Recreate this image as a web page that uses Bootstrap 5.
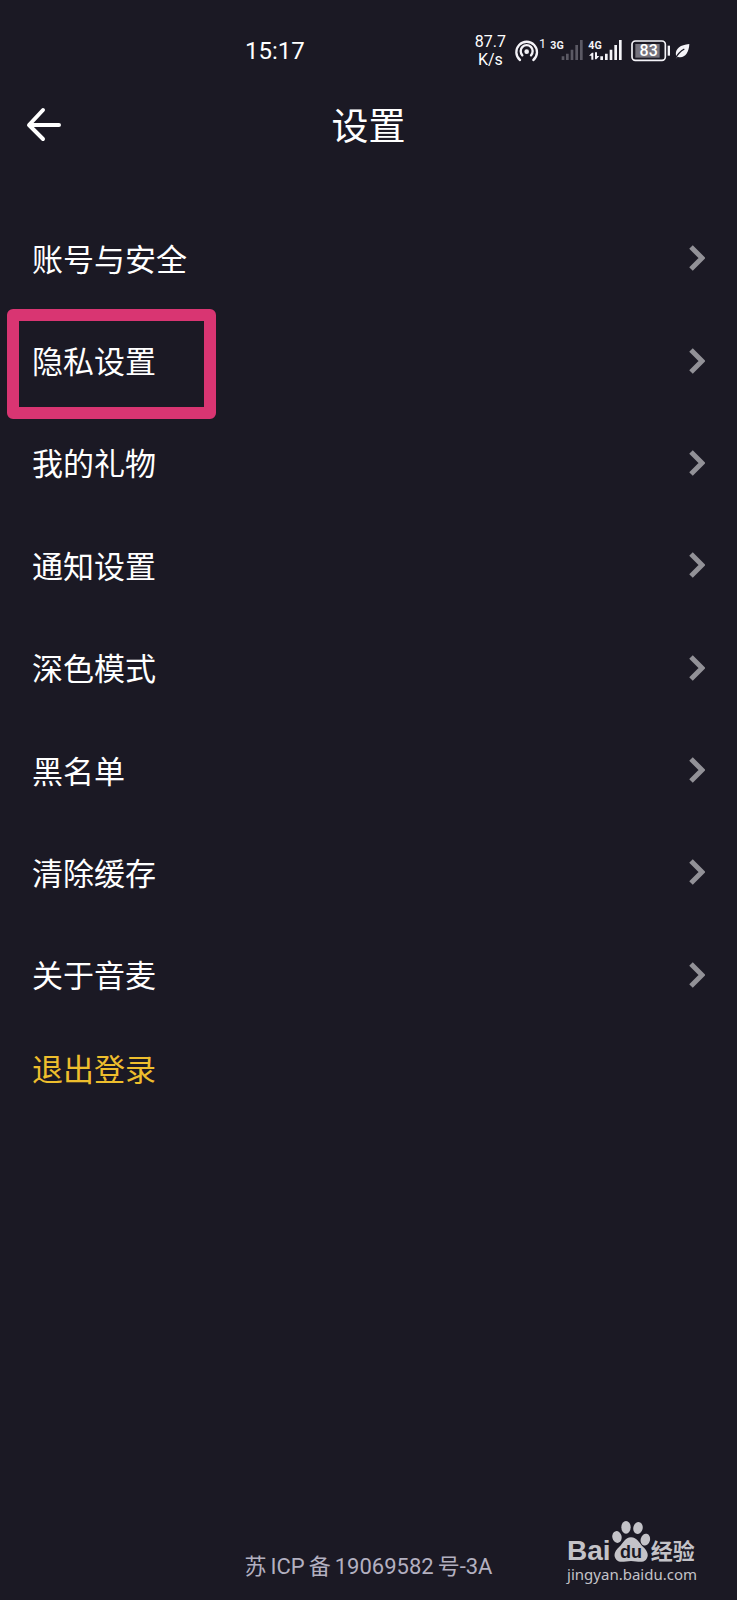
<!DOCTYPE html>
<html lang="zh-CN">
<head>
<meta charset="utf-8">
<meta name="viewport" content="width=device-width, initial-scale=1">
<title>设置</title>
<link href="https://cdn.jsdelivr.net/npm/bootstrap@5.3.0/dist/css/bootstrap.min.css" rel="stylesheet">
<style>
  body { background: #1b1924; color: #fff; font-family: Roboto, "Noto Sans CJK SC", sans-serif; }
  svg { display: block; flex: none; }
  .status-bar { height: 100px; padding: 0 47px 0 245px; }
  .clock { font-size: 24px; line-height: 26px; padding-top: 2px; }
  .net-speed { font-size: 16px; line-height: 18px; text-align: center; padding-top: 2px; }
  .status-icons { gap: 4px; }
  .title-bar { height: 50px; }
  .title-bar h1 { font-size: 37px; line-height: 50px; font-weight: 400; padding-top: 3px; }
  .back-btn { left: 24px; top: 4px; }
  .settings { margin-top: 57px; min-height: 819px; }
  .settings-row { padding: 0 32px; font-size: 31px; line-height: 40px; color: #fff; }
  .settings-row > span:first-child { padding-top: 5px; }
  .highlight-box { left: 7px; top: 0; width: 209px; height: 110px; border: 12px solid #d93572; border-radius: 6px; pointer-events: none; }
  .logout { padding: 4px 32px 0; height: 86px; font-size: 31px; line-height: 40px; color: #eebe2d; }
  .icp { font-size: 22px; line-height: 28px; color: #b3b0c0; padding-bottom: 19px; }
  .watermark { right: 40px; bottom: 15px; color: #c4c3c8; }
  .wm-latin { font: 700 28px/24px "Liberation Sans", sans-serif; }
  .wm-cjk { font: 700 22px/27px "Noto Sans CJK SC", sans-serif; }
  .wm-url { font: 400 15px/22px "Noto Sans", sans-serif; }
</style>
</head>
<body>
<div class="d-flex flex-column min-vh-100 position-relative">
  <div class="status-bar d-flex align-items-center justify-content-between">
    <span class="clock">15:17</span>
    <div class="status-icons d-flex align-items-center">
      <div class="net-speed me-1">87.7<br>K/s</div>
      <svg width="32" height="26" viewBox="162 36 96 78" fill="none" stroke="#f4f3f8" stroke-width="7" stroke-linecap="round">
        <path d="M180 105A31 31 0 1 1 220 105M187 91A18 18 0 1 1 213 91"/>
        <circle cx="200" cy="80" r="7" fill="#f4f3f8" stroke="none"/>
        <text x="237" y="68" font-size="38" fill="#f4f3f8" stroke="none">1</text>
      </svg>
      <svg width="34" height="26" viewBox="270 36 102 78" fill="#5b5964">
        <text x="271" y="71" font-family="Liberation Sans Narrow, Roboto" font-weight="700" font-size="32" fill="#f4f3f8">3G</text>
        <path d="M305 94h8v11h-8zM318 86h8v19h-8zM332 74h8v31h-8zM346 60h8v45h-8zM360 45h8v60h-8z"/>
      </svg>
      <svg width="35" height="26" viewBox="387 36 105 78" fill="#f4f3f8">
        <text x="388" y="71" font-family="Liberation Sans Narrow, Roboto" font-weight="700" font-size="32">4G</text>
        <path d="M424 94h8v11h-8zM438 86h8v19h-8zM452 74h8v31h-8zM466 60h8v45h-8zM480 45h8v60h-8z"/>
        <path d="M390 92l9-9h4v21h-6V92zM408 82v21h4l9-10h-7V82z"/>
      </svg>
      <svg class="ms-1" width="40" height="26" viewBox="512 36 120 78">
        <rect x="515" y="48" width="100" height="58" rx="10" fill="none" stroke="#f4f3f8" stroke-width="5"/>
        <rect x="525" y="57" width="73" height="41" fill="#75737d"/>
        <path d="M622 62h7v30h-7z" fill="#f4f3f8"/>
        <text x="565" y="94" text-anchor="middle" font-weight="500" font-size="48" fill="#fff">83</text>
      </svg>
      <svg width="15" height="26" viewBox="642 36 45 78">
        <path d="M646 96C640 76 652 60 685 57C684 86 668 102 650 95L644 101" fill="#f4f3f8"/>
        <path d="M643 101Q652 82 670 72" fill="none" stroke="#1b1924" stroke-width="4"/>
      </svg>
    </div>
  </div>

  <header class="title-bar position-relative text-center">
    <button type="button" class="back-btn btn p-0 border-0 position-absolute" aria-label="返回">
      <svg width="42" height="42" viewBox="0 0 42 42" fill="none" stroke="#fff" stroke-width="4" stroke-linecap="round" stroke-linejoin="round"><path d="M19 6L5 21L19 35M6 21H35"/></svg>
    </button>
    <h1 class="m-0">设置</h1>
  </header>

  <nav class="settings d-flex flex-column" aria-label="设置">
    <a href="#" class="settings-row flex-fill d-flex align-items-center justify-content-between text-decoration-none"><span>账号与安全</span><svg width="16" height="26" viewBox="0 0 16 26" fill="none" stroke="#929197" stroke-width="5"><path d="M2 2L13 13L2 24"/></svg></a>
    <a href="#" class="settings-row flex-fill d-flex align-items-center justify-content-between text-decoration-none position-relative"><span>隐私设置</span><svg width="16" height="26" viewBox="0 0 16 26" fill="none" stroke="#929197" stroke-width="5"><path d="M2 2L13 13L2 24"/></svg><span class="highlight-box position-absolute"></span></a>
    <a href="#" class="settings-row flex-fill d-flex align-items-center justify-content-between text-decoration-none"><span>我的礼物</span><svg width="16" height="26" viewBox="0 0 16 26" fill="none" stroke="#929197" stroke-width="5"><path d="M2 2L13 13L2 24"/></svg></a>
    <a href="#" class="settings-row flex-fill d-flex align-items-center justify-content-between text-decoration-none"><span>通知设置</span><svg width="16" height="26" viewBox="0 0 16 26" fill="none" stroke="#929197" stroke-width="5"><path d="M2 2L13 13L2 24"/></svg></a>
    <a href="#" class="settings-row flex-fill d-flex align-items-center justify-content-between text-decoration-none"><span>深色模式</span><svg width="16" height="26" viewBox="0 0 16 26" fill="none" stroke="#929197" stroke-width="5"><path d="M2 2L13 13L2 24"/></svg></a>
    <a href="#" class="settings-row flex-fill d-flex align-items-center justify-content-between text-decoration-none"><span>黑名单</span><svg width="16" height="26" viewBox="0 0 16 26" fill="none" stroke="#929197" stroke-width="5"><path d="M2 2L13 13L2 24"/></svg></a>
    <a href="#" class="settings-row flex-fill d-flex align-items-center justify-content-between text-decoration-none"><span>清除缓存</span><svg width="16" height="26" viewBox="0 0 16 26" fill="none" stroke="#929197" stroke-width="5"><path d="M2 2L13 13L2 24"/></svg></a>
    <a href="#" class="settings-row flex-fill d-flex align-items-center justify-content-between text-decoration-none"><span>关于音麦</span><svg width="16" height="26" viewBox="0 0 16 26" fill="none" stroke="#929197" stroke-width="5"><path d="M2 2L13 13L2 24"/></svg></a>
  </nav>
  <button type="button" class="logout btn border-0 rounded-0 text-start">退出登录</button>

  <footer class="icp mt-auto text-center">苏<span class="mx-1">ICP</span>备<span class="mx-1">19069582</span>号-3A</footer>

  <div class="watermark position-absolute">
    <div class="d-flex align-items-end">
      <span class="wm-latin">Bai</span>
      <svg width="40" height="43" viewBox="208 30 120 129" fill="#c4c3c8">
        <ellipse cx="226" cy="81" rx="14" ry="18" transform="rotate(-12 226 81)"/>
        <ellipse cx="253" cy="52" rx="14" ry="19"/>
        <ellipse cx="289" cy="54" rx="14" ry="18" transform="rotate(14 289 54)"/>
        <ellipse cx="311" cy="89" rx="14" ry="18" transform="rotate(14 311 89)"/>
        <path d="M268 82C286 82 292 99 304 110C318 123 323 136 313 149C302 161 286 153 268 153C250 153 235 161 224 149C213 136 220 122 233 110C246 99 250 82 268 82Z"/>
        <text x="268" y="145" text-anchor="middle" font-family="Liberation Sans" font-weight="700" font-size="54" fill="#1b1924">du</text>
      </svg>
      <span class="wm-cjk">经验</span>
    </div>
    <div class="wm-url">jingyan.baidu.com</div>
  </div>
</div>
<script src="https://cdn.jsdelivr.net/npm/bootstrap@5.3.0/dist/js/bootstrap.bundle.min.js"></script>
</body>
</html>
